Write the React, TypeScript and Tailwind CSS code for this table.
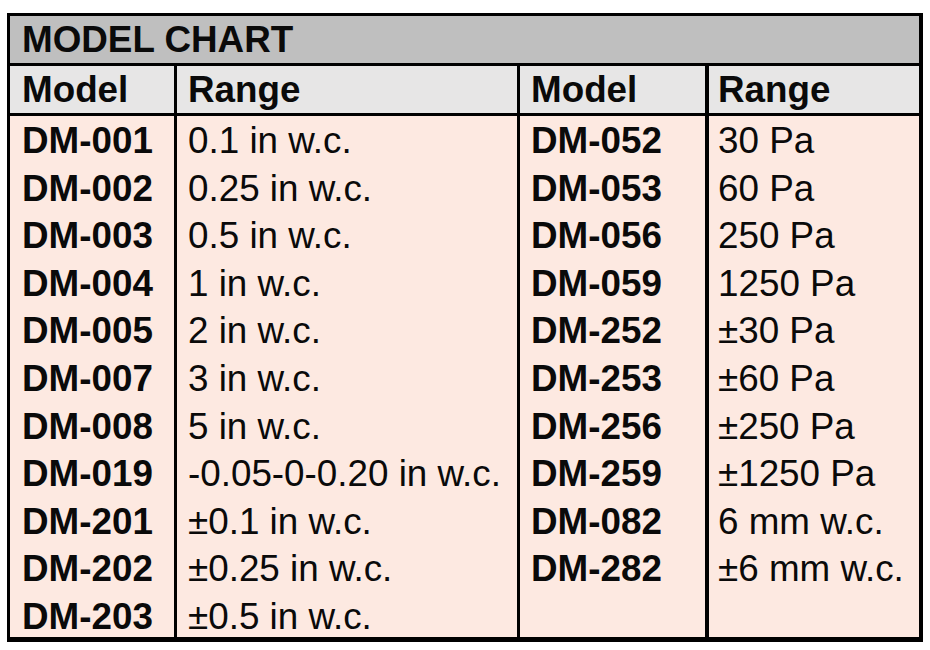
import React from "react";

const left = [
  ["DM-001", "0.1 in w.c."],
  ["DM-002", "0.25 in w.c."],
  ["DM-003", "0.5 in w.c."],
  ["DM-004", "1 in w.c."],
  ["DM-005", "2 in w.c."],
  ["DM-007", "3 in w.c."],
  ["DM-008", "5 in w.c."],
  ["DM-019", "-0.05-0-0.20 in w.c."],
  ["DM-201", "±0.1 in w.c."],
  ["DM-202", "±0.25 in w.c."],
  ["DM-203", "±0.5 in w.c."],
];

const right = [
  ["DM-052", "30 Pa"],
  ["DM-053", "60 Pa"],
  ["DM-056", "250 Pa"],
  ["DM-059", "1250 Pa"],
  ["DM-252", "±30 Pa"],
  ["DM-253", "±60 Pa"],
  ["DM-256", "±250 Pa"],
  ["DM-259", "±1250 Pa"],
  ["DM-082", "6 mm w.c."],
  ["DM-282", "±6 mm w.c."],
];

function Col({
  items,
  bold,
  width,
  border,
  pad,
}: {
  items: string[];
  bold?: boolean;
  width: string;
  border: string;
  pad: string;
}) {
  return (
    <div className={`${width} ${border} ${pad} flex flex-col shrink-0 pt-[1px]`}>
      {items.map((t, i) => (
        <div
          key={i}
          className={`h-[47.6px] leading-[47.6px] whitespace-nowrap ${bold ? "font-bold" : "font-normal"}`}
        >
          {t}
        </div>
      ))}
    </div>
  );
}

export default function App() {
  return (
    <div
      className="w-[930px] h-[650px] bg-white pt-[13px] pl-[7px] text-[36.8px] text-[#0a0a0a] overflow-hidden"
      style={{ fontFamily: '"Liberation Sans", Arial, sans-serif' }}
    >
      <div className="w-[916px] h-[629px] border-l-[3px] border-t-[3px] border-r-[4px] border-b-[5px] border-black flex flex-col overflow-hidden">
        <div className="h-[47px] bg-[#bfbfbf] font-bold leading-[48px] pl-[12px] border-b-[3px] border-black box-content">
          MODEL CHART
        </div>
        <div className="h-[47px] bg-[#e7e6e6] font-bold leading-[48px] border-b-[3px] border-black box-content flex">
          <div className="w-[167px] border-r-[3px] border-black pl-[12px] shrink-0">Model</div>
          <div className="w-[343px] border-r-[3px] border-black pl-[11px] shrink-0">Range</div>
          <div className="w-[189px] border-r-[4px] border-black pl-[11px] shrink-0">Model</div>
          <div className="flex-1 pl-[9px]">Range</div>
        </div>
        <div className="flex-1 bg-[#fde9e1] flex overflow-hidden">
          <Col items={left.map((r) => r[0])} bold width="w-[167px]" border="border-r-[3px] border-black" pad="pl-[12px]" />
          <Col items={left.map((r) => r[1])} width="w-[343px]" border="border-r-[3px] border-black" pad="pl-[11px]" />
          <Col items={right.map((r) => r[0])} bold width="w-[189px]" border="border-r-[4px] border-black" pad="pl-[11px]" />
          <Col items={right.map((r) => r[1])} width="flex-1" border="" pad="pl-[9px]" />
        </div>
      </div>
    </div>
  );
}
